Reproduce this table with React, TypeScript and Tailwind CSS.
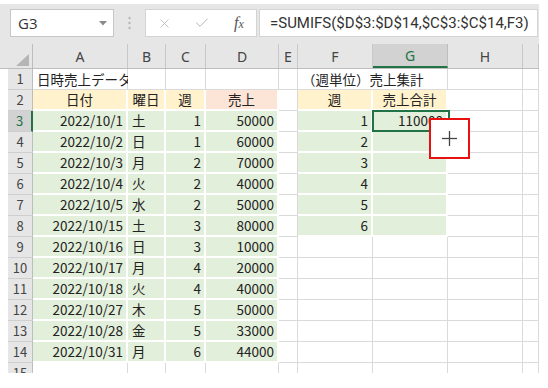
import React from 'react';
import { X, Check } from 'lucide-react';

const cols = [
  { key: 'A', w: 'w-[95px]' },
  { key: 'B', w: 'w-[38px]' },
  { key: 'C', w: 'w-[40px]' },
  { key: 'D', w: 'w-[73px]' },
  { key: 'E', w: 'w-[19px]' },
  { key: 'F', w: 'w-[75px]' },
  { key: 'G', w: 'w-[75px]' },
  { key: 'H', w: 'w-[75px]' },
  { key: 'I', w: 'w-[16px]' },
];

const sales = [
  ['2022/10/1', '土', '1', '50000'],
  ['2022/10/2', '日', '1', '60000'],
  ['2022/10/3', '月', '2', '70000'],
  ['2022/10/4', '火', '2', '40000'],
  ['2022/10/5', '水', '2', '50000'],
  ['2022/10/15', '土', '3', '80000'],
  ['2022/10/16', '日', '3', '10000'],
  ['2022/10/17', '月', '4', '20000'],
  ['2022/10/18', '火', '4', '40000'],
  ['2022/10/27', '木', '5', '50000'],
  ['2022/10/28', '金', '5', '33000'],
  ['2022/10/31', '月', '6', '44000'],
];

type Fill = 'none' | 'green' | 'yellow' | 'peach';
type Align = 'left' | 'center' | 'right';

type CellDef = { text?: string; fill?: Fill; align?: Align };

const fillClass: Record<Fill, string> = {
  none: 'bg-white border-r border-b border-[#dadada]',
  green: 'bg-[#e2efda] border-r-2 border-b-2 border-white',
  yellow: 'bg-[#fff2cc] border-r-2 border-b-2 border-white',
  peach: 'bg-[#fce4d6] border-r-2 border-b-2 border-white',
};

const alignClass: Record<Align, string> = {
  left: 'justify-start pl-[4px]',
  center: 'justify-center',
  right: 'justify-end pr-[3px]',
};

const Cell = ({ w, def }: { w: string; def: CellDef }) => (
  <div
    className={`${w} h-full shrink-0 flex items-center whitespace-nowrap ${fillClass[def.fill ?? 'none']} ${alignClass[def.align ?? 'left']}`}
  >
    {def.text}
  </div>
);

const RowHead = ({ n, active }: { n: number; active?: boolean }) => (
  <div
    className={`w-[25px] h-full shrink-0 flex items-center justify-center border-b border-[#cfcfcf] text-[13px] ${
      active
        ? 'bg-[#d2d2d2] text-[#217346] border-r-2 border-r-[#217346]'
        : 'bg-[#e6e6e6] text-[#444] border-r border-r-[#bdbdbd]'
    }`}
  >
    {n}
  </div>
);

function buildRow(r: number): CellDef[] {
  const empty: CellDef[] = cols.map(() => ({}));
  if (r === 2) {
    return [
      { text: '日付', fill: 'yellow', align: 'center' },
      { text: '曜日', fill: 'yellow', align: 'center' },
      { text: '週', fill: 'yellow', align: 'center' },
      { text: '売上', fill: 'peach', align: 'center' },
      {},
      { text: '週', fill: 'yellow', align: 'center' },
      { text: '売上合計', fill: 'yellow', align: 'center' },
      {},
      {},
    ];
  }
  if (r >= 3 && r <= 14) {
    const d = sales[r - 3];
    const inSummary = r <= 8;
    return [
      { text: d[0], fill: 'green', align: 'right' },
      { text: d[1], fill: 'green', align: 'left' },
      { text: d[2], fill: 'green', align: 'right' },
      { text: d[3], fill: 'green', align: 'right' },
      {},
      inSummary ? { text: String(r - 2), fill: 'green', align: 'right' } : {},
      inSummary ? { text: r === 3 ? '110000' : '', fill: 'green', align: 'right' } : {},
      {},
      {},
    ];
  }
  return empty;
}

const Toolbar = () => (
  <div className="mt-[4px] h-[40px] w-[539px] bg-[#e6e6e6] flex items-start pt-[5px]">
    {/* name box */}
    <div className="ml-[10px] w-[104px] h-[28px] bg-white border border-[#c6c6c6] flex items-center pl-[7px] pr-[6px]">
      <span className="text-[15px] text-[#333] font-['Open_Sans',sans-serif]">G3</span>
      <svg className="ml-auto" width="8" height="5" viewBox="0 0 8 5">
        <polygon points="0,0 8,0 4,4.5" fill="#8a8a8a" />
      </svg>
    </div>
    {/* grip */}
    <div className="w-[31px] h-[28px] flex items-center justify-center">
      <svg width="3" height="14" viewBox="0 0 3 14">
        <circle cx="1.5" cy="2" r="1.2" fill="#b8b8b8" />
        <circle cx="1.5" cy="7" r="1.2" fill="#b8b8b8" />
        <circle cx="1.5" cy="12" r="1.2" fill="#b8b8b8" />
      </svg>
    </div>
    {/* buttons */}
    <div className="w-[112px] h-[28px] bg-white border border-[#d4d4d4] flex items-center">
      <X className="ml-[11px] w-[15px] h-[15px] text-[#b4b4b4]" strokeWidth={1.3} />
      <Check className="ml-[22px] w-[16px] h-[16px] text-[#b4b4b4]" strokeWidth={1.5} />
      <span className="ml-[24px] italic text-[#555] text-[16px] font-['Liberation_Serif',serif] leading-none">
        f<span className="text-[12px]">x</span>
      </span>
    </div>
    {/* formula */}
    <div className="ml-[2px] w-[279px] h-[28px] bg-white border border-[#d4d4d4] flex items-center pl-[10px] overflow-hidden">
      <span className="text-[15px] text-[#333] whitespace-nowrap font-['Roboto',sans-serif]">
        =SUMIFS($D$3:$D$14,$C$3:$C$14,F3)
      </span>
    </div>
  </div>
);

export default function App() {
  return (
    <div className="w-[548px] h-[388px] bg-white overflow-hidden font-['Noto_Sans_CJK_JP',sans-serif] text-[#222]">
      <Toolbar />
      <div className="relative w-[539px] h-[329px] overflow-hidden">
        {/* column headers */}
        <div className="flex h-[25px] bg-[#e6e6e6] border-b border-[#bdbdbd] pl-[8px]">
          <div className="w-[25px] h-full shrink-0 flex items-end justify-end pr-[3px] pb-[2px] border-r border-[#bdbdbd]">
            <svg width="13" height="12" viewBox="0 0 13 12">
              <polygon points="13,0 13,12 0,12" fill="#b5b5b5" />
            </svg>
          </div>
          {cols.map((c) => (
            <div
              key={c.key}
              className={`${c.w} h-full shrink-0 flex items-center justify-center text-[14px] font-['Noto_Sans',sans-serif] ${
                c.key === 'G'
                  ? 'bg-[#d2d2d2] text-[#217346] border-b-2 border-[#217346] border-r border-r-[#bdbdbd]'
                  : 'text-[#444] border-r border-[#c8c8c8]'
              }`}
            >
              {c.key === 'I' ? '' : c.key}
            </div>
          ))}
        </div>

        {/* body rows */}
        <div className="pl-[8px] text-[13.5px]">
          {Array.from({ length: 15 }, (_, i) => i + 1).map((r) => {
            if (r === 1) {
              return (
                <div key={r} className="flex h-[21px]">
                  <RowHead n={r} />
                  <Cell w="w-[95px]" def={{ text: '日時売上データ' }} />
                  <Cell w="w-[38px]" def={{}} />
                  <Cell w="w-[40px]" def={{}} />
                  <Cell w="w-[73px]" def={{}} />
                  <Cell w="w-[19px]" def={{}} />
                  <Cell w="w-[150px]" def={{ text: '（週単位）売上集計' }} />
                  <Cell w="w-[75px]" def={{}} />
                  <Cell w="w-[16px]" def={{}} />
                </div>
              );
            }
            const defs = buildRow(r);
            return (
              <div key={r} className="flex h-[21px]">
                <RowHead n={r} active={r === 3} />
                {cols.map((c, j) => (
                  <Cell key={c.key} w={c.w} def={defs[j]} />
                ))}
              </div>
            );
          })}
        </div>

        {/* active cell G3 */}
        <div className="absolute left-[372px] top-[66px] w-[78px] h-[22px] border-2 border-[#217346]" />

        {/* pointer highlight */}
        <div className="absolute left-[429px] top-[74px] w-[41px] h-[41px] bg-white border-2 border-[#e81010] flex items-center justify-center">
          <svg width="15" height="15" viewBox="0 0 15 15">
            <line x1="7.5" y1="0" x2="7.5" y2="15" stroke="#444" strokeWidth="1.3" />
            <line x1="0" y1="7.5" x2="15" y2="7.5" stroke="#444" strokeWidth="1.3" />
          </svg>
        </div>
      </div>
    </div>
  );
}
